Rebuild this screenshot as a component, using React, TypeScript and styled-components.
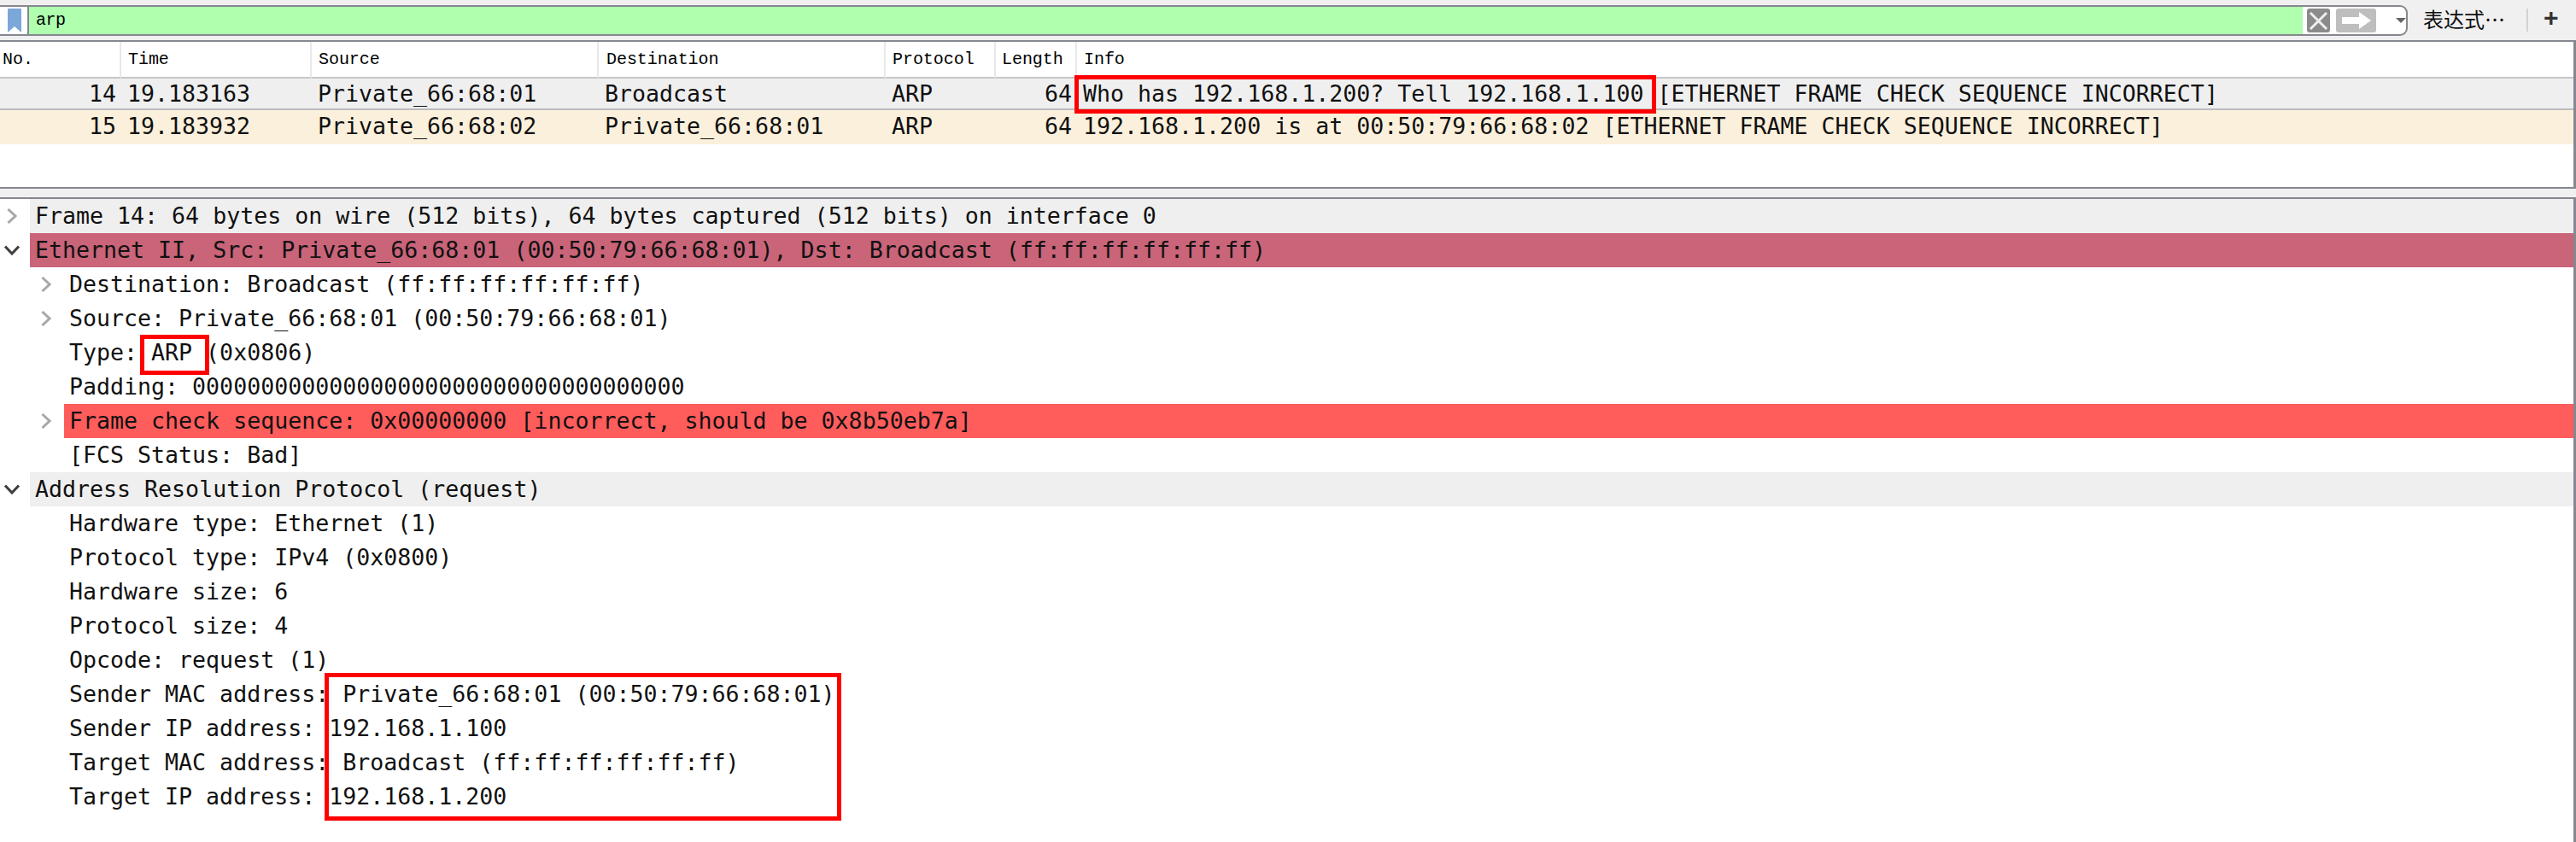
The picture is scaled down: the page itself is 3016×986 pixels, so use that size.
import React from "react";
import styled, { createGlobalStyle } from "styled-components";

const GlobalStyle = createGlobalStyle`
  html, body {
    margin: 0;
    padding: 0;
    background: #fff;
  }
  * {
    box-sizing: border-box;
  }
`;

const MONO = `"DejaVu Sans Mono", "Liberation Mono", monospace`;
const BITMAP = `"Liberation Mono", monospace`;
const BORDER = "#85888f";

const Page = styled.div`
  position: relative;
  width: 3016px;
  height: 986px;
  overflow: hidden;
  display: flex;
  flex-direction: column;
  background: #f0f0f0;
  color: #111;
`;

/* filter toolbar */
const Toolbar = styled.div`
  height: 47px;
  padding-top: 6px;
  display: flex;
  align-items: flex-start;
  flex-shrink: 0;
`;
const FilterBox = styled.div`
  width: 2819px;
  height: 36px;
  display: flex;
  background: #fff;
  border: 2px solid ${BORDER};
  border-left: none;
  border-radius: 0 9px 9px 0;
`;
const BookmarkButton = styled.div`
  width: 34px;
  display: flex;
  align-items: center;
  justify-content: center;
  padding-left: 2px;
  border-right: 2px solid ${BORDER};
`;
const FilterInput = styled.div`
  flex: 1;
  padding-left: 8px;
  background: #afffaf;
  font: 20px/31px ${BITMAP};
  letter-spacing: -0.5px;
  color: #000;
`;
const FilterControls = styled.div`
  width: 121px;
  display: flex;
  align-items: center;
  padding-left: 5px;
  gap: 7px;
`;
const ClearButton = styled.div`
  width: 27px;
  height: 28px;
  border-radius: 3px;
  background: #8b8b8b;
  display: flex;
  align-items: center;
  justify-content: center;
`;
const ApplyButton = styled.div`
  width: 47px;
  height: 28px;
  border-radius: 3px;
  background: #bebebe;
  display: flex;
  align-items: center;
  justify-content: center;
`;
const DropCaret = styled.div`
  margin-left: 16px;
  width: 0;
  height: 0;
  border-left: 6px solid transparent;
  border-right: 6px solid transparent;
  border-top: 6px solid #666;
`;
const ExpressionLink = styled.div`
  margin-left: 18px;
  width: 121px;
  font: 24px/32px "Noto Sans CJK SC", sans-serif;
  color: #111;
  white-space: nowrap;
`;
const ToolbarDivider = styled.div`
  width: 2px;
  height: 27px;
  margin-top: 4px;
  background: #d2d2d2;
`;
const AddButton = styled.div`
  margin-left: 18px;
  font: bold 30px/30px "Liberation Sans", sans-serif;
  color: #333;
`;

/* packet list */
const PacketPane = styled.div`
  height: 174px;
  flex-shrink: 0;
  background: #fff;
  border-top: 2px solid ${BORDER};
  border-right: 3px solid ${BORDER};
  border-bottom: 2px solid ${BORDER};
`;
const COLUMNS = "142px 223px 336px 336px 129px 95px 1fr";
const ColumnHeader = styled.div`
  height: 42px;
  display: grid;
  grid-template-columns: ${COLUMNS};
`;
const HeaderCell = styled.div<{ $pad: number }>`
  padding-left: ${(p) => p.$pad}px;
  border-right: 2px solid #e8e8e8;
  border-bottom: 2px solid #c6c6c6;
  font: 20px/41px ${BITMAP};
  letter-spacing: -0.05px;
  color: #000;
  white-space: nowrap;
  &:last-child {
    border-right: none;
  }
`;
const PacketRow = styled.div<{ $bg: string; $line?: boolean }>`
  height: ${(p) => (p.$line ? 38 : 40)}px;
  display: grid;
  grid-template-columns: ${COLUMNS};
  background: ${(p) => p.$bg};
  border-bottom: ${(p) => (p.$line ? "2px solid #bcbcbc" : "none")};
  font: 26.6px/38px ${MONO};
  white-space: pre;
`;
const PacketCell = styled.div<{ $num?: boolean }>`
  text-align: ${(p) => (p.$num ? "right" : "left")};
  padding: ${(p) => (p.$num ? "0 6px 0 0" : "0 0 0 7px")};
`;

const PaneGap = styled.div`
  height: 10px;
  flex-shrink: 0;
`;

/* packet details tree */
const DetailPane = styled.div`
  flex: 1;
  background: #fff;
  border-top: 2px solid ${BORDER};
  border-right: 3px solid ${BORDER};
`;
const TreeRow = styled.div<{ $level: number }>`
  height: 40px;
  display: flex;
  padding-left: ${(p) => p.$level * 40}px;
`;
const Twisty = styled.div`
  width: 35px;
  flex-shrink: 0;
  padding-right: 7px;
  display: flex;
  align-items: center;
  justify-content: center;
`;
const TreeLabel = styled.div<{ $bg?: string }>`
  flex: 1;
  padding-left: 6px;
  background: ${(p) => p.$bg || "transparent"};
  font: 26.6px/40px ${MONO};
  white-space: pre;
`;

/* red annotation boxes drawn on top of the capture */
const Callout = styled.div<{ $x: number; $y: number; $w: number; $h: number }>`
  position: absolute;
  left: ${(p) => p.$x}px;
  top: ${(p) => p.$y}px;
  width: ${(p) => p.$w}px;
  height: ${(p) => p.$h}px;
  border: 5px solid #fe0000;
  pointer-events: none;
`;

const Bookmark = () => (
  <svg width="16" height="28" viewBox="0 0 16 28">
    <path d="M0 1 Q0 0 1 0 H15 Q16 0 16 1 V28 L8 21 L0 28 Z" fill="#7ba7d9" />
  </svg>
);

const ClearIcon = () => (
  <svg width="23" height="23" viewBox="0 0 23 23">
    <path d="M2 2 L21 21 M21 2 L2 21" stroke="#eee" strokeWidth="3" fill="none" />
  </svg>
);

const ArrowIcon = () => (
  <svg width="34" height="20" viewBox="0 0 34 20">
    <path d="M0 6 H20 V0 L34 10 L20 20 V14 H0 Z" fill="#fff" />
  </svg>
);

const Chevron = ({ open }: { open?: boolean }) =>
  open ? (
    <svg width="18" height="12" viewBox="0 0 18 12">
      <path d="M1 1.5 L9 10 L17 1.5" fill="none" stroke="#3f3f3f" strokeWidth="3" />
    </svg>
  ) : (
    <svg width="12" height="18" viewBox="0 0 12 18">
      <path d="M1.5 1 L10 9 L1.5 17" fill="none" stroke="#a8a8a8" strokeWidth="3" />
    </svg>
  );

const headers: [string, number][] = [
  ["No.", 3],
  ["Time", 8],
  ["Source", 8],
  ["Destination", 9],
  ["Protocol", 8],
  ["Length", 7],
  ["Info", 8],
];

const packets = [
  {
    no: "14",
    time: "19.183163",
    src: "Private_66:68:01",
    dst: "Broadcast",
    info: "Who has 192.168.1.200? Tell 192.168.1.100 [ETHERNET FRAME CHECK SEQUENCE INCORRECT]",
    bg: "#efefef",
    line: true,
  },
  {
    no: "15",
    time: "19.183932",
    src: "Private_66:68:02",
    dst: "Private_66:68:01",
    info: "192.168.1.200 is at 00:50:79:66:68:02 [ETHERNET FRAME CHECK SEQUENCE INCORRECT]",
    bg: "#fbf0dc",
    line: false,
  },
];

type Node = {
  text: string;
  level: number;
  twisty?: "open" | "closed";
  bg?: string;
};

const tree: Node[] = [
  { text: "Frame 14: 64 bytes on wire (512 bits), 64 bytes captured (512 bits) on interface 0", level: 0, twisty: "closed", bg: "#efefef" },
  { text: "Ethernet II, Src: Private_66:68:01 (00:50:79:66:68:01), Dst: Broadcast (ff:ff:ff:ff:ff:ff)", level: 0, twisty: "open", bg: "#c96479" },
  { text: "Destination: Broadcast (ff:ff:ff:ff:ff:ff)", level: 1, twisty: "closed" },
  { text: "Source: Private_66:68:01 (00:50:79:66:68:01)", level: 1, twisty: "closed" },
  { text: "Type: ARP (0x0806)", level: 1 },
  { text: "Padding: 000000000000000000000000000000000000", level: 1 },
  { text: "Frame check sequence: 0x00000000 [incorrect, should be 0x8b50eb7a]", level: 1, twisty: "closed", bg: "#ff5c5c" },
  { text: "[FCS Status: Bad]", level: 1 },
  { text: "Address Resolution Protocol (request)", level: 0, twisty: "open", bg: "#efefef" },
  { text: "Hardware type: Ethernet (1)", level: 1 },
  { text: "Protocol type: IPv4 (0x0800)", level: 1 },
  { text: "Hardware size: 6", level: 1 },
  { text: "Protocol size: 4", level: 1 },
  { text: "Opcode: request (1)", level: 1 },
  { text: "Sender MAC address: Private_66:68:01 (00:50:79:66:68:01)", level: 1 },
  { text: "Sender IP address: 192.168.1.100", level: 1 },
  { text: "Target MAC address: Broadcast (ff:ff:ff:ff:ff:ff)", level: 1 },
  { text: "Target IP address: 192.168.1.200", level: 1 },
];

const App = () => {
  return (
    <Page>
      <GlobalStyle />
      <Toolbar>
        <FilterBox>
          <BookmarkButton>
            <Bookmark />
          </BookmarkButton>
          <FilterInput>arp</FilterInput>
          <FilterControls>
            <ClearButton>
              <ClearIcon />
            </ClearButton>
            <ApplyButton>
              <ArrowIcon />
            </ApplyButton>
            <DropCaret />
          </FilterControls>
        </FilterBox>
        <ExpressionLink>表达式…</ExpressionLink>
        <ToolbarDivider />
        <AddButton>+</AddButton>
      </Toolbar>

      <PacketPane>
        <ColumnHeader>
          {headers.map(([label, pad]) => (
            <HeaderCell key={label} $pad={pad}>
              {label}
            </HeaderCell>
          ))}
        </ColumnHeader>
        {packets.map((p) => (
          <PacketRow key={p.no} $bg={p.bg} $line={p.line}>
            <PacketCell $num>{p.no}</PacketCell>
            <PacketCell>{p.time}</PacketCell>
            <PacketCell>{p.src}</PacketCell>
            <PacketCell>{p.dst}</PacketCell>
            <PacketCell>ARP</PacketCell>
            <PacketCell $num>64</PacketCell>
            <PacketCell>{p.info}</PacketCell>
          </PacketRow>
        ))}
      </PacketPane>

      <PaneGap />

      <DetailPane>
        {tree.map((node) => (
          <TreeRow key={node.text} $level={node.level}>
            <Twisty>{node.twisty && <Chevron open={node.twisty === "open"} />}</Twisty>
            <TreeLabel $bg={node.bg}>{node.text}</TreeLabel>
          </TreeRow>
        ))}
      </DetailPane>

      <Callout $x={1258} $y={88} $w={681} $h={45} />
      <Callout $x={164} $y={392} $w={81} $h={47} />
      <Callout $x={380} $y={788} $w={605} $h={173} />
    </Page>
  );
};

export default App;
